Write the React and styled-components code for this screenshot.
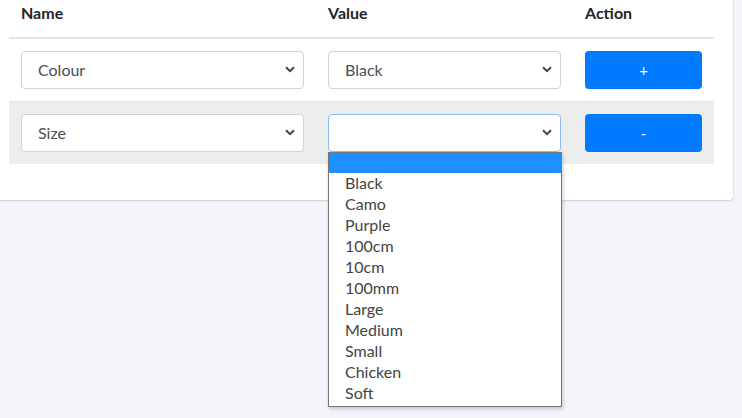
import React from 'react';
import styled, { createGlobalStyle } from 'styled-components';

const GlobalStyle = createGlobalStyle`
  html, body {
    margin: 0;
    padding: 0;
    background: #f4f5fa;
    font-family: Lato, "Noto Sans", sans-serif;
    overflow: hidden;
  }
`;

const Page = styled.div`
  width: 742px;
  height: 418px;
  overflow: hidden;
  background: #f4f5fa;
`;

const Card = styled.div`
  margin: -20px 0 0 -10px;
  width: 743px;
  box-sizing: border-box;
  padding: 10px 19px 36px 19px;
  background: #fff;
  border-radius: 4px;
  box-shadow: 0 1px 2px rgba(0, 0, 0, 0.12), 0 0 0 1px rgba(0, 0, 0, 0.04);
`;

const Table = styled.table`
  width: 705px;
  border-collapse: collapse;
  table-layout: fixed;
  color: #212529;
`;

const HeadCell = styled.th`
  width: ${(p) => p.$w}px;
  box-sizing: border-box;
  text-align: left;
  padding: 12px 12px 13px;
  font-size: 16px;
  line-height: 22px;
  font-weight: 700;
  border-bottom: 2px solid #e2e4e7;
`;

const Row = styled.tr`
  background: ${(p) => (p.$striped ? '#ededed' : 'transparent')};
`;

const Cell = styled.td`
  padding: 12px;
  border-top: 1px solid #e2e4e7;
  vertical-align: middle;
`;

const SelectWrap = styled.div`
  position: relative;
`;

const SelectBox = styled.div`
  height: 38px;
  box-sizing: border-box;
  display: flex;
  align-items: center;
  justify-content: space-between;
  padding: 0 8px 2px 16px;
  background: #fff;
  border: 1px solid ${(p) => (p.$focused ? '#8dbdf5' : '#ced4da')};
  border-radius: 4px;
  font-size: 16px;
  color: #495057;
`;

const Chevron = () => (
  <svg width="10" height="7" viewBox="0 0 10 7">
    <polyline points="1,1.2 5,5.2 9,1.2" fill="none" stroke="#444" strokeWidth="2" />
  </svg>
);

const Button = styled.button`
  width: 117px;
  height: 38px;
  border: none;
  border-radius: 4px;
  background: #007bff;
  color: #fff;
  font-family: inherit;
  font-size: 15px;
  display: flex;
  align-items: center;
  justify-content: center;
  padding: 0 0 1px;
`;

const Dropdown = styled.ul`
  position: absolute;
  top: 100%;
  left: 0;
  width: 234px;
  margin: 0;
  padding: 0 0 2px;
  list-style: none;
  background: #fff;
  border: 1px solid #767676;
  box-sizing: border-box;
  box-shadow: 1px 2px 4px rgba(0, 0, 0, 0.2);
  z-index: 10;
`;

const Option = styled.li`
  height: ${(p) => (p.$active ? 20 : 21)}px;
  line-height: ${(p) => (p.$active ? 20 : 19)}px;
  padding-left: 16px;
  font-size: 16px;
  color: #444;
  background: ${(p) => (p.$active ? '#1e90ff' : '#fff')};
`;

const options = ['', 'Black', 'Camo', 'Purple', '100cm', '10cm', '100mm', 'Large', 'Medium', 'Small', 'Chicken', 'Soft'];

const Select = ({ value, focused, open }) => (
  <SelectWrap>
    <SelectBox $focused={focused}>
      <span>{value}</span>
      <Chevron />
    </SelectBox>
    {open && (
      <Dropdown>
        {options.map((o, i) => (
          <Option key={i} $active={i === 0}>{o}</Option>
        ))}
      </Dropdown>
    )}
  </SelectWrap>
);

export default function App() {
  return (
    <Page>
      <GlobalStyle />
      <Card>
        <Table>
          <thead>
            <tr>
              <HeadCell $w={307}>Name</HeadCell>
              <HeadCell $w={257}>Value</HeadCell>
              <HeadCell $w={141}>Action</HeadCell>
            </tr>
          </thead>
          <tbody>
            <Row>
              <Cell><Select value="Colour" /></Cell>
              <Cell><Select value="Black" /></Cell>
              <Cell><Button>+</Button></Cell>
            </Row>
            <Row $striped>
              <Cell><Select value="Size" /></Cell>
              <Cell><Select value="" focused open /></Cell>
              <Cell><Button>-</Button></Cell>
            </Row>
          </tbody>
        </Table>
      </Card>
    </Page>
  );
}
